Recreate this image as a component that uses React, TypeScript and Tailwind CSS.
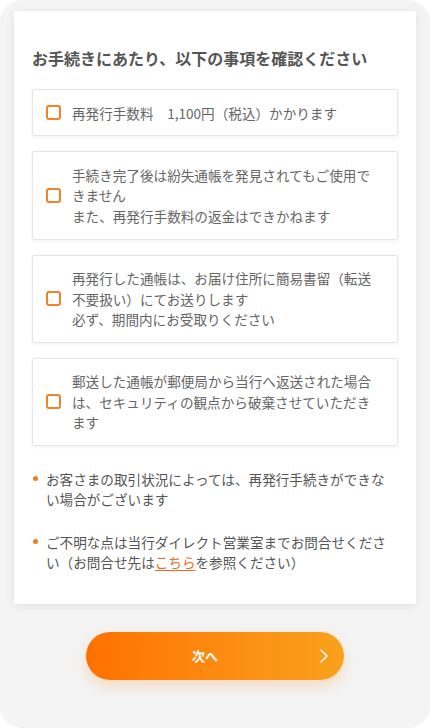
import React, { useState } from 'react';

const items = [
  ['再発行手数料　1,100円（税込）かかります'],
  ['手続き完了後は紛失通帳を発見されてもご使用できません', 'また、再発行手数料の返金はできかねます'],
  ['再発行した通帳は、お届け住所に簡易書留（転送不要扱い）にてお送りします', '必ず、期間内にお受取りください'],
  ['郵送した通帳が郵便局から当行へ返送された場合は、セキュリティの観点から破棄させていただきます'],
];

function CheckItem({ lines }: { lines: string[] }) {
  const [checked, setChecked] = useState(false);
  return (
    <label className="flex items-center gap-[11px] rounded-[2px] border border-[#e6e6e6] bg-white py-[12.5px] pl-[13px] pr-[14px] shadow-[0_1px_4px_rgba(0,0,0,0.06)] cursor-pointer">
      <span
        onClick={() => setChecked(!checked)}
        className={`h-[15px] w-[15px] shrink-0 rounded-[3px] border-2 border-[#f08228] ${checked ? 'bg-[#f08228]' : 'bg-white'}`}
      />
      <span className="text-[13.6px] leading-[20.4px] text-[#666]">
        {lines.map((l, i) => (
          <span key={i} className="block">{l}</span>
        ))}
      </span>
    </label>
  );
}

export default function App() {
  return (
    <div className="min-h-[728px] bg-white font-['Noto_Sans_CJK_JP',sans-serif]">
      <div className="flex min-h-[728px] flex-col rounded-[22px] bg-[#f4f4f4] px-[14px] pt-[11px]">
        <div className="bg-white px-[18px] pt-[35px] pb-[31px] shadow-[0_2px_10px_rgba(0,0,0,0.08)]">
          <h2 className="text-[16px] font-bold leading-[24px] text-[#555]">
            お手続きにあたり、以下の事項を確認ください
          </h2>
          <div className="mt-[19px] flex flex-col gap-[15px]">
            {items.map((lines, i) => (
              <CheckItem key={i} lines={lines} />
            ))}
          </div>
          <ul className="mt-[23px] flex flex-col gap-[22px] text-[13.6px] leading-[20.4px] text-[#555]">
            <li className="relative pl-[14px]">
              <span className="absolute left-[1px] top-[7px] h-[5px] w-[5px] rounded-full bg-[#f07a20]" />
              お客さまの取引状況によっては、再発行手続きができない場合がございます
            </li>
            <li className="relative pl-[14px]">
              <span className="absolute left-[1px] top-[7px] h-[5px] w-[5px] rounded-full bg-[#f07a20]" />
              ご不明な点は当行ダイレクト営業室までお問合せください（お問合せ先は
              <a href="#" className="text-[#f26b1d] underline underline-offset-2">こちら</a>
              を参照ください）
            </li>
          </ul>
        </div>
        <div className="flex justify-center pt-[28px]">
          <button className="relative h-[48px] w-[258px] rounded-full bg-gradient-to-r from-[#ff7100] to-[#f9a11c] shadow-[0_6px_14px_rgba(250,140,30,0.25)]">
            <span className="block pr-[20px] text-[13px] font-bold text-white">次へ</span>
            <svg
              className="absolute right-[15px] top-1/2 -translate-y-1/2"
              width="10"
              height="16"
              viewBox="0 0 10 16"
              fill="none"
            >
              <path d="M2 2l6 6-6 6" stroke="white" strokeWidth="1.6" strokeLinecap="round" strokeLinejoin="round" />
            </svg>
          </button>
        </div>
      </div>
    </div>
  );
}
